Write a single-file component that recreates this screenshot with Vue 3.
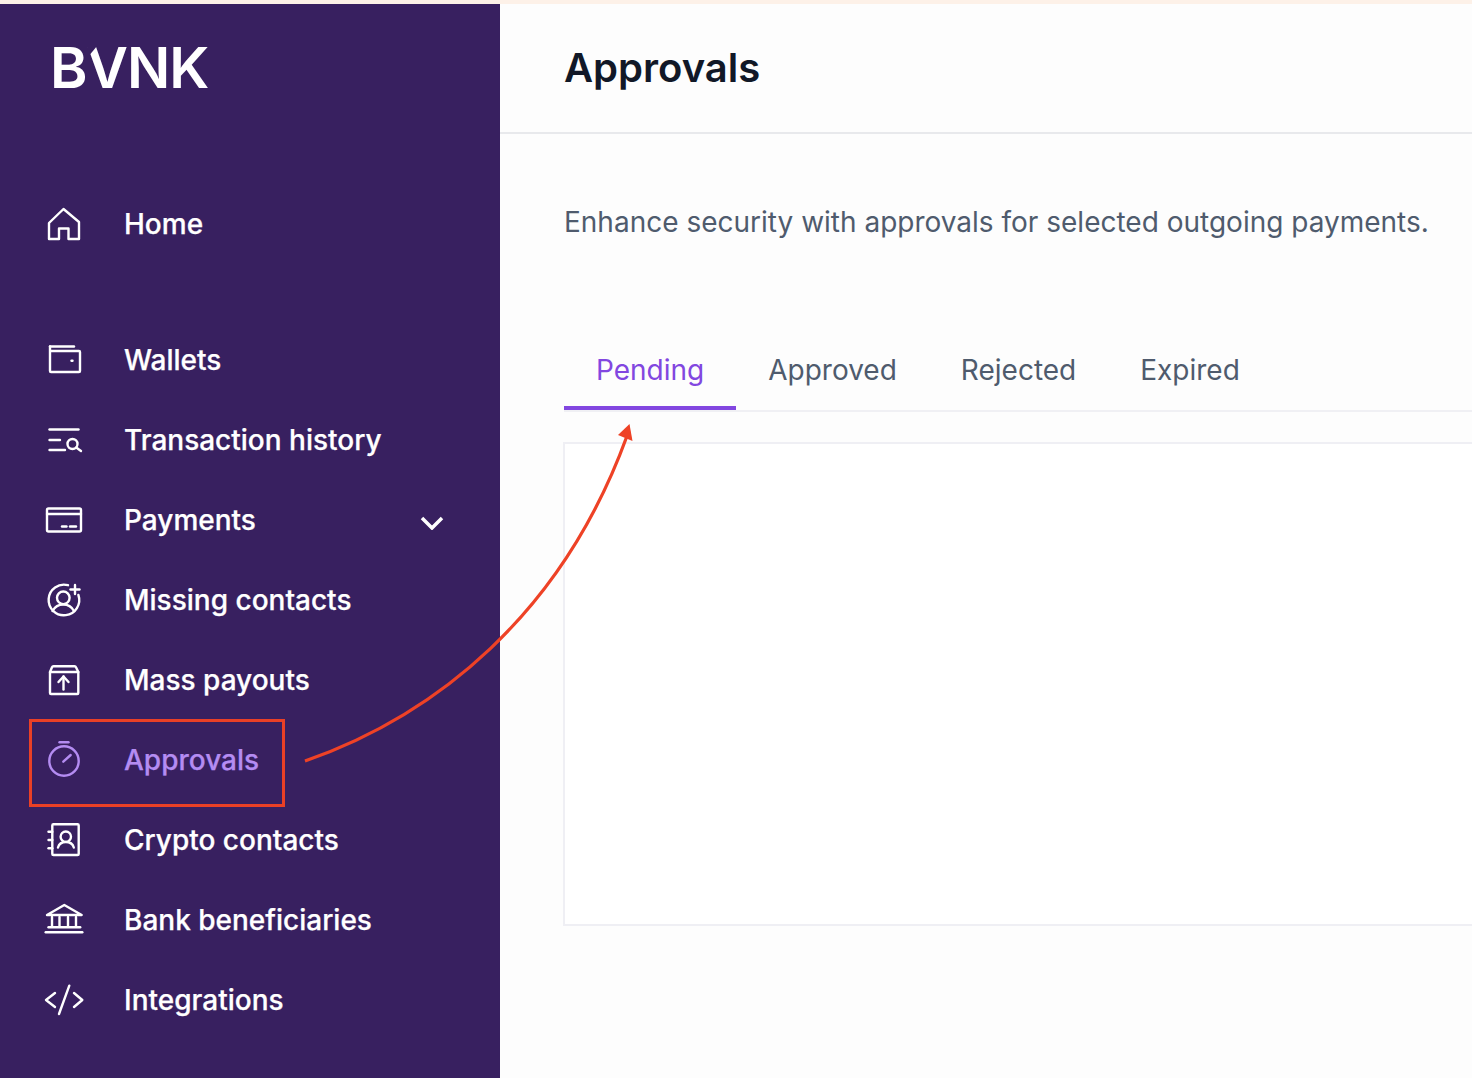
<script setup>
const top = { id: 'home', label: 'Home' }
const items = [
  { id: 'wallet', label: 'Wallets' },
  { id: 'history', label: 'Transaction history' },
  { id: 'payments', label: 'Payments', chevron: true },
  { id: 'missing', label: 'Missing contacts' },
  { id: 'mass', label: 'Mass payouts' },
  { id: 'approvals', label: 'Approvals', active: true },
  { id: 'crypto', label: 'Crypto contacts' },
  { id: 'bank', label: 'Bank beneficiaries' },
  { id: 'code', label: 'Integrations' }
]
const icons = {
  home: ['M5 19 L19.5 5 L35 18 V35 H24.5 V24.5 H15 V35 H5 Z'],
  wallet: ['M6 6.5 H30', 'M6 6.5 V31 Q6 32 7 32 H35 Q36 32 36 31 V12 Q36 11 35 11 H6', 'M27.5 20.7 H28.5'],
  history: ['M5.5 9.5 H34.5', 'M5.5 20 H16', 'M5.5 30 H21', 'M28.5 19 A5 5 0 1 0 28.5 29 A5 5 0 1 0 28.5 19 Z', 'M32.2 27.5 L37 31'],
  payments: ['M4.5 8.5 H35.5 Q37 8.5 37 10 V30 Q37 31.5 35.5 31.5 H4.5 Q3 31.5 3 30 V10 Q3 8.5 4.5 8.5 Z', 'M3 14 H37', 'M18 26.5 H22.5', 'M26 26.5 H32'],
  missing: ['M24 5.2 A15.3 15.3 0 1 0 34.4 15', 'M19.3 11.5 A6.3 6.3 0 1 0 19.3 24.1 A6.3 6.3 0 1 0 19.3 11.5 Z', 'M8.5 31 C11 26.5 15 24.5 19.3 24.5 C23.5 24.5 27.5 26.5 30 31', 'M31 5 V14', 'M26.5 9.5 H35.5'],
  mass: ['M6 12 L8 7.3 Q8.4 6.3 9.5 6.3 H30.5 Q31.6 6.3 32 7.3 L34.3 12', 'M6 12 H34.3 V33 Q34.3 34 33.3 34 H7 Q6 34 6 33 Z', 'M19.5 29.5 V16.5', 'M14.5 22 L19.5 16.5 L24.5 22'],
  approvals: ['M20 6.3 A14.7 14.7 0 1 0 20 35.7 A14.7 14.7 0 1 0 20 6.3 Z', 'M15.5 2.3 H24.5', 'M19.3 21.7 L26.7 15'],
  crypto: ['M9.5 4.3 H33.5 Q34.7 4.3 34.7 5.5 V34 Q34.7 35 33.5 35 H9.5 Q8.3 35 8.3 34 V5.5 Q8.3 4.3 9.5 4.3 Z', 'M4.5 11.7 H8.3', 'M4.5 20 H8.3', 'M4.5 28.3 H8.3', 'M21.8 11.5 A5.2 5.2 0 1 0 21.8 21.9 A5.2 5.2 0 1 0 21.8 11.5 Z', 'M14 27.5 C15 24 18 22 21.8 22 C25.6 22 28.8 24 29.8 27.5'],
  bank: ['M3 15 L20.3 5 L37.7 15 Z', 'M8 17 V26', 'M15.5 17 V26', 'M24 17 V26', 'M32 17 V26', 'M4.5 27.3 H36.2', 'M1.7 32.3 H38.3'],
  code: ['M11 13 L2 20 L11 27', 'M25.3 5.7 L15 34', 'M30 13 L38.3 20 L30 27']
}
const tabs = ['Pending', 'Approved', 'Rejected', 'Expired']
</script>

<template>
  <div class="page">
    <div class="banner"></div>
    <div class="body">
      <aside class="sidebar">
        <div class="logo">BVNK</div>
        <nav class="group first">
          <a class="item">
            <svg class="icon" viewBox="0 0 40 40"><path v-for="d in icons[top.id]" :key="d" :d="d" /></svg>
            <span>{{ top.label }}</span>
          </a>
        </nav>
        <nav class="group">
          <a v-for="item in items" :key="item.id" class="item" :class="{ active: item.active }">
            <svg class="icon" viewBox="0 0 40 40"><path v-for="d in icons[item.id]" :key="d" :d="d" /></svg>
            <span>{{ item.label }}</span>
            <svg v-if="item.chevron" class="chevron" viewBox="0 0 24 14"><path d="M2 2 L12 12 L22 2" /></svg>
          </a>
        </nav>
      </aside>
      <main class="main">
        <header class="header"><h1>Approvals</h1></header>
        <p class="intro">Enhance security with approvals for selected outgoing payments.</p>
        <div class="tabs">
          <button v-for="(tab, i) in tabs" :key="tab" class="tab" :class="{ selected: i === 0 }">{{ tab }}</button>
        </div>
        <section class="panel"></section>
      </main>
    </div>
    <div class="highlight"></div>
    <svg class="arrow" viewBox="0 0 1472 1078">
      <path class="curve" d="M305 761 C435 715.5 562 615 627 436" />
      <path class="head" d="M629.5 424 L618 435 L632.5 441 Z" />
    </svg>
  </div>
</template>

<style>
html, body { margin: 0; background: #fdfdfd; }
</style>

<style scoped>
.page {
  position: relative;
  width: 1472px;
  height: 1078px;
  overflow: hidden;
  background: #fdfdfd;
  font-family: Inter, "Liberation Sans", sans-serif;
}
.banner { height: 4px; background: #fdf1e8; }
.body { display: flex; height: 1074px; }
.sidebar {
  width: 500px;
  flex: none;
  background: #382060;
  color: #fff;
}
.logo {
  position: relative;
  height: 180px;
  padding: 33px 0 0 50px;
  box-sizing: border-box;
  font-size: 57px;
  line-height: 62px;
  font-weight: 600;
  letter-spacing: -1px;
}
.logo::after {
  content: "";
  position: absolute;
  left: 88px;
  top: 42px;
  width: 9px;
  height: 11px;
  background: #382060;
  clip-path: polygon(0 0, 100% 0, 0 100%);
}
.group { display: flex; flex-direction: column; }
.first { margin-bottom: 56px; }
.item {
  display: flex;
  align-items: center;
  gap: 40px;
  height: 80px;
  padding: 0 56px 0 44px;
  font-size: 28px;
  font-weight: 500;
  -webkit-text-stroke: 0.25px currentColor;
}
.icon {
  width: 40px;
  height: 40px;
  flex: none;
  fill: none;
  stroke: #fff;
  stroke-width: 2.4;
  stroke-linecap: round;
  stroke-linejoin: round;
}
.item.active { color: #b48cf2; }
.item.active .icon { stroke: #b48cf2; }
.chevron {
  width: 24px;
  height: 14px;
  margin: 6px 0 0 auto;
  fill: none;
  stroke: #fff;
  stroke-width: 3.5;
}
.main { flex: 1; min-width: 0; }
.header {
  box-sizing: content-box;
  height: 126px;
  padding: 0 0 2px 64px;
  border-bottom: 2px solid #e8e9ec;
  display: flex;
  align-items: center;
}
.header h1 {
  margin: 0;
  font-size: 40px;
  font-weight: 600;
  color: #111827;
}
.intro {
  margin: 0;
  padding: 70px 0 0 64px;
  font-size: 28px;
  line-height: 36px;
  color: #4f5b6d;
  white-space: nowrap;
}
.tabs {
  display: flex;
  margin: 94px 0 0 64px;
  border-bottom: 2px solid #f0f0f4;
}
.tab {
  height: 76px;
  padding: 0 32px;
  border: 0;
  background: none;
  font: inherit;
  font-size: 28px;
  color: #4f5b6d;
  border-bottom: 4px solid transparent;
}
.tab.selected { color: #8247e0; border-bottom-color: #8247e0; }
.panel {
  height: 480px;
  margin: 30px -4px 0 63px;
  background: #fff;
  border: 2px solid #efeff4;
}
.highlight {
  position: absolute;
  left: 29px;
  top: 719px;
  width: 250px;
  height: 82px;
  border: 3px solid #ea4026;
}
.arrow {
  position: absolute;
  inset: 0;
  width: 1472px;
  height: 1078px;
  pointer-events: none;
}
.curve { fill: none; stroke: #ee4226; stroke-width: 3.2; }
.head { fill: #ee4226; }
</style>
